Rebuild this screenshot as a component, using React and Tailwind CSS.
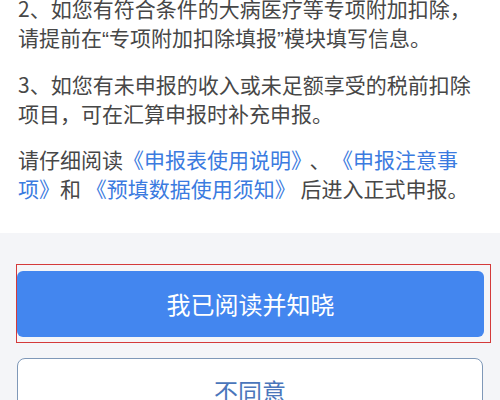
import React from 'react';

const font = { fontFamily: '"Noto Sans CJK SC", "Noto Sans", sans-serif' };

function Link({ children }) {
  return <span className="text-[#3b7be0]">{children}</span>;
}

function Quote({ children }) {
  return <span style={{ fontFamily: '"Liberation Sans", sans-serif' }}>{children}</span>;
}

export default function App() {
  return (
    <div className="w-[500px] h-[400px] overflow-hidden bg-[#f4f5f8]" style={font}>
      {/* Notice text */}
      <div className="bg-white pl-[18px] pr-[20px] pb-[30px]">
        <div className="-mt-[6px] text-[21px] leading-[29px] text-[#474747] flex flex-col gap-[17px]">
          <p>
            2、如您有符合条件的大病医疗等专项附加扣除，
            <br />
            请提前在<Quote>“</Quote>专项附加扣除填报<Quote>”</Quote>模块填写信息。
          </p>
          <p>
            3、如您有未申报的收入或未足额享受的税前扣除
            <br />
            项目，可在汇算申报时补充申报。
          </p>
          <p>
            请仔细阅读<Link>《申报表使用说明》</Link>
            <span className="ml-[8px] mr-[12px]">、</span>
            <Link>《申报注意事</Link>
            <br />
            <Link>项》</Link>和 <Link>《预填数据使用须知》</Link> 后进入正式申报。
          </p>
        </div>
      </div>

      {/* Actions */}
      <div className="pt-[31px] pl-[16px] pr-[9px] flex flex-col gap-[15px]">
        <div className="border border-[#d43a3a] pt-[6px] pb-[5px] pr-[6px]">
          <button className="w-full h-[66px] rounded-[6px] bg-[#4386ef] text-white text-[24px]">
            我已阅读并知晓
          </button>
        </div>
        <button className="ml-[1px] mr-[8px] h-[66px] rounded-[8px] bg-white border border-[#7f98b8] text-[#4a76bb] text-[24px]">
          不同意
        </button>
      </div>
    </div>
  );
}
